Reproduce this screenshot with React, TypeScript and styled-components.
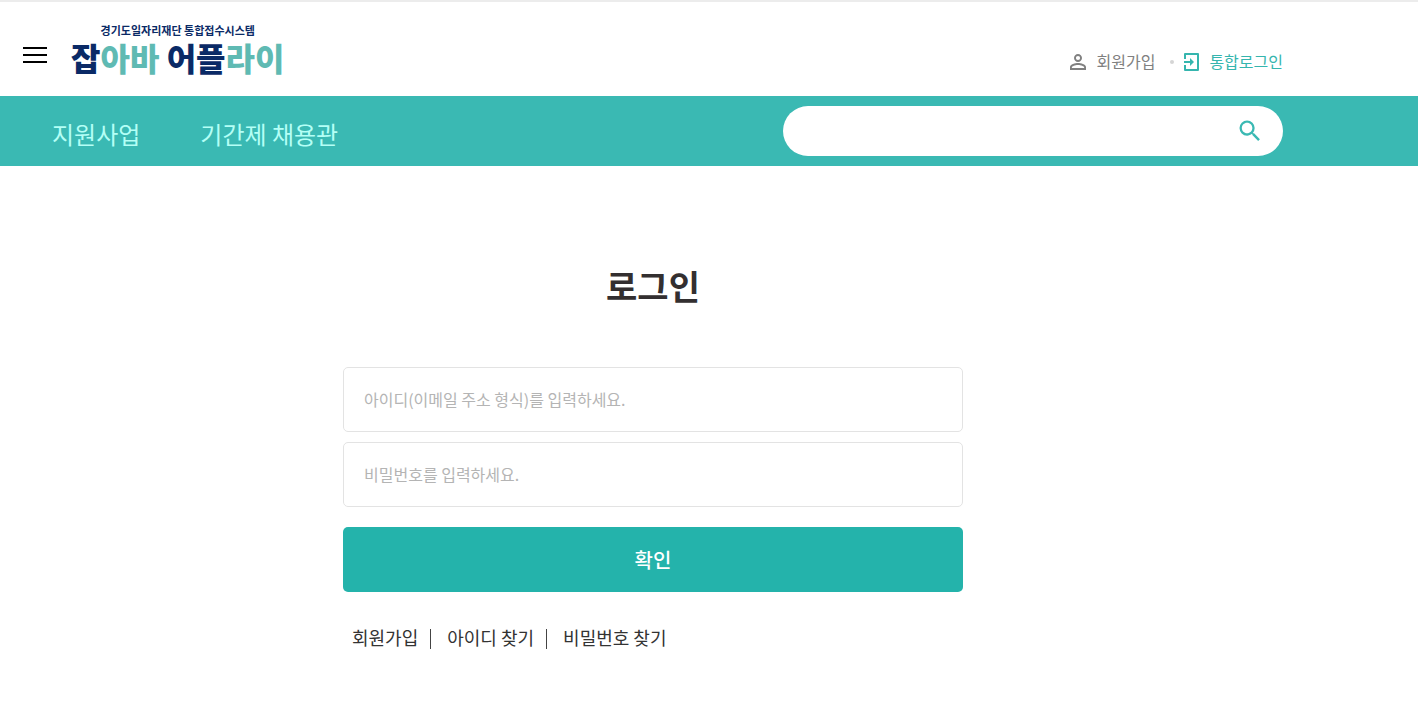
import React from "react";
import styled, { createGlobalStyle } from "styled-components";
import { MdPersonOutline, MdSearch } from "react-icons/md";

const GlobalStyle = createGlobalStyle`
  * { box-sizing: border-box; }
  body {
    margin: 0;
    background: #fff;
    color: #333;
    font-family: "Noto Sans CJK KR", "Noto Sans", sans-serif;
    font-size: 16px;
    line-height: 24px;
  }
  a { color: inherit; text-decoration: none; }
  button, input { font: inherit; }
`;

const Header = styled.header`
  display: flex;
  align-items: flex-start;
  min-height: 96px;
  padding: 20px 135px 0 23px;
  border-top: 2px solid #ececec;
`;

const MenuButton = styled.button`
  display: flex;
  flex-direction: column;
  gap: 5px;
  width: 24px;
  margin-top: 25px;
  padding: 0;
  border: 0;
  background: none;
  cursor: pointer;
`;

const MenuLine = styled.span`
  height: 2px;
  background: #000;
`;

const Logo = styled.a`
  display: flex;
  flex-direction: column;
  align-items: center;
  margin-left: 24px;
  color: #0a2a66;
`;

const LogoCaption = styled.span`
  font-size: 11px;
  font-weight: 700;
  line-height: 16px;
`;

const LogoName = styled.span`
  font-size: 32px;
  font-weight: 900;
  line-height: 38px;
  white-space: nowrap;
`;

const LogoAccent = styled.span`
  color: #5fbab3;
`;

const UserMenu = styled.nav`
  display: flex;
  align-items: center;
  gap: 8px;
  margin: 28px 0 0 auto;
`;

const UserLink = styled.a<{ $active?: boolean }>`
  display: flex;
  align-items: flex-start;
  gap: 7px;
  line-height: 22px;
  color: ${(p) => (p.$active ? "#35b5ae" : "#808080")};
`;

const Dot = styled.span`
  width: 4px;
  height: 4px;
  margin-left: 7px;
  border-radius: 50%;
  background: #d5d5d5;
`;

const NavBar = styled.div`
  display: flex;
  align-items: center;
  justify-content: space-between;
  min-height: 70px;
  padding: 10px 135px 10px 52px;
  background: #3ab9b3;
`;

const MainNav = styled.nav`
  display: flex;
  gap: 60px;
  padding-top: 6px;
  color: #b4fff6;
  font-size: 24px;
  line-height: 36px;
  white-space: nowrap;
`;

const Search = styled.form`
  display: flex;
  align-items: center;
  width: 500px;
  height: 50px;
  padding: 0 19px 0 25px;
  border-radius: 25px;
  background: #fff;
`;

const SearchInput = styled.input`
  flex: 1;
  min-width: 0;
  border: 0;
  outline: 0;
  background: none;
`;

const SearchButton = styled.button`
  display: flex;
  padding: 0;
  border: 0;
  background: none;
  color: #3ab9b3;
  cursor: pointer;
`;

const Main = styled.main`
  padding: 94px 112px 40px 0;
`;

const LoginForm = styled.form`
  display: flex;
  flex-direction: column;
  max-width: 620px;
  margin: 0 auto;
`;

const Title = styled.h1`
  margin: 0 0 55px;
  color: #332f30;
  font-size: 34px;
  font-weight: 700;
  line-height: 52px;
  text-align: center;
`;

const Field = styled.input`
  height: 65px;
  margin-bottom: 10px;
  padding: 0 20px 2px;
  border: 1px solid #e3e3e3;
  border-radius: 5px;
  background: #fff;
  &::placeholder { color: #b4b4b4; opacity: 1; }
`;

const SubmitButton = styled.button`
  height: 65px;
  margin-top: 10px;
  border: 0;
  border-radius: 5px;
  background: #24b3ab;
  color: #fff;
  font-size: 20px;
  font-weight: 500;
  cursor: pointer;
`;

const HelpLinks = styled.nav`
  display: flex;
  align-items: flex-start;
  gap: 16px;
  margin: 32px 0 0 9px;
  font-size: 18px;
  line-height: 26px;
`;

const Divider = styled.span`
  width: 1px;
  height: 20px;
  margin: 5px 0 0 -4px;
  background: #444;
`;

function LoginIcon() {
  return (
    <svg width="20" height="24" viewBox="0 -2 20 24" fill="none" stroke="currentColor" aria-hidden="true">
      <path strokeWidth="2" strokeLinejoin="round" d="M3 7V2h13v16H3v-5" />
      <path strokeWidth="2" d="M2 10h8" />
      <path fill="currentColor" stroke="none" d="M8 6l4 4-4 4z" />
    </svg>
  );
}

export default function App() {
  return (
    <>
      <GlobalStyle />
      <Header>
        <MenuButton type="button" aria-label="전체 메뉴">
          <MenuLine />
          <MenuLine />
          <MenuLine />
        </MenuButton>
        <Logo href="#">
          <LogoCaption>경기도일자리재단 통합접수시스템</LogoCaption>
          <LogoName>
            잡<LogoAccent>아바</LogoAccent> 어플<LogoAccent>라이</LogoAccent>
          </LogoName>
        </Logo>
        <UserMenu>
          <UserLink href="#">
            <MdPersonOutline size={24} />
            회원가입
          </UserLink>
          <Dot />
          <UserLink href="#" $active>
            <LoginIcon />
            통합로그인
          </UserLink>
        </UserMenu>
      </Header>
      <NavBar>
        <MainNav>
          <a href="#">지원사업</a>
          <a href="#">기간제 채용관</a>
        </MainNav>
        <Search role="search">
          <SearchInput type="search" aria-label="검색어" />
          <SearchButton type="button" aria-label="검색">
            <MdSearch size={28} />
          </SearchButton>
        </Search>
      </NavBar>
      <Main>
        <LoginForm>
          <Title>로그인</Title>
          <Field type="email" aria-label="아이디" placeholder="아이디(이메일 주소 형식)를 입력하세요." />
          <Field type="password" aria-label="비밀번호" placeholder="비밀번호를 입력하세요." />
          <SubmitButton type="button">확인</SubmitButton>
          <HelpLinks>
            <a href="#">회원가입</a>
            <Divider />
            <a href="#">아이디 찾기</a>
            <Divider />
            <a href="#">비밀번호 찾기</a>
          </HelpLinks>
        </LoginForm>
      </Main>
    </>
  );
}
